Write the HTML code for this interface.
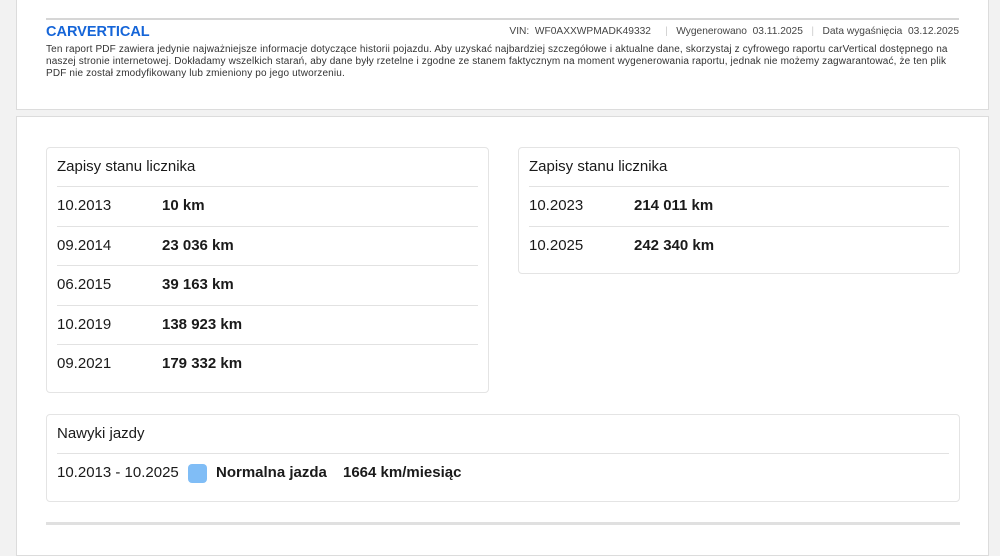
<!DOCTYPE html><html><head><meta charset="utf-8"><style>
*{margin:0;padding:0;box-sizing:border-box}
body{width:1000px;height:536px;overflow:hidden;background:#f2f2f2;font-family:"Liberation Sans",sans-serif;color:#1a1a1a;position:relative}
.card{position:absolute;background:#fff;border:1px solid #dcdcdc}
.in{position:absolute;background:#fff;border:1px solid #e4e4e4;border-radius:4px}
.t{position:absolute;left:10px;top:10px;font-size:15px}
.sep{position:absolute;left:10px;right:10px;height:1px;background:#e2e2e2}
.row{position:absolute;left:10px;font-size:15px;height:20px;line-height:20px}
.row b{position:absolute;left:105px;white-space:nowrap}
</style></head><body>
<div class="card" style="left:16px;top:-2px;width:973px;height:112px">
 <div style="position:absolute;left:29px;top:19px;width:913px;height:2px;background:#d6d6d6"></div>
 <div style="position:absolute;left:29px;top:25px;font-size:14.5px;font-weight:bold;color:#1565d8">CARVERTICAL</div>
 <div style="position:absolute;right:29px;top:27px;font-size:10.2px;color:#444;white-space:nowrap">VIN:&nbsp; WF0AXXWPMADK49332 &nbsp;&nbsp;&nbsp;&nbsp;<span style="color:#ccc">|</span>&nbsp;&nbsp; Wygenerowano&nbsp; 03.11.2025&nbsp;&nbsp; <span style="color:#ccc">|</span>&nbsp;&nbsp; Data wygaśnięcia&nbsp; 03.12.2025</div>
 <div style="position:absolute;left:29px;top:45px;white-space:nowrap;font-size:10px;line-height:12px;color:#333;letter-spacing:0.15px">Ten raport PDF zawiera jedynie najważniejsze informacje dotyczące historii pojazdu. Aby uzyskać najbardziej szczegółowe i aktualne dane, skorzystaj z cyfrowego raportu carVertical dostępnego na<br>naszej stronie internetowej. Dokładamy wszelkich starań, aby dane były rzetelne i zgodne ze stanem faktycznym na moment wygenerowania raportu, jednak nie możemy zagwarantować, że ten plik<br>PDF nie został zmodyfikowany lub zmieniony po jego utworzeniu.</div>
</div>
<div class="card" style="left:16px;top:116px;width:973px;height:440px">
 <div style="position:absolute;left:29px;top:405px;width:914px;height:3px;background:#e0e0e0"></div>
</div>
<div class="in" style="left:46px;top:147px;width:443px;height:246px">
 <div class="t">Zapisy stanu licznika</div>
 <div class="sep" style="top:38px"></div>
 <div class="row" style="top:48px">10.2013<b>10 km</b></div>
 <div class="sep" style="top:78px"></div>
 <div class="row" style="top:88px">09.2014<b>23 036 km</b></div>
 <div class="sep" style="top:117px"></div>
 <div class="row" style="top:127px">06.2015<b>39 163 km</b></div>
 <div class="sep" style="top:157px"></div>
 <div class="row" style="top:167px">10.2019<b>138 923 km</b></div>
 <div class="sep" style="top:196px"></div>
 <div class="row" style="top:206px">09.2021<b>179 332 km</b></div>
</div>
<div class="in" style="left:518px;top:147px;width:442px;height:127px">
 <div class="t">Zapisy stanu licznika</div>
 <div class="sep" style="top:38px"></div>
 <div class="row" style="top:48px">10.2023<b>214 011 km</b></div>
 <div class="sep" style="top:78px"></div>
 <div class="row" style="top:88px">10.2025<b>242 340 km</b></div>
</div>
<div class="in" style="left:46px;top:414px;width:914px;height:88px">
 <div class="t">Nawyki jazdy</div>
 <div class="sep" style="top:38px"></div>
 <div class="row" style="top:48px;white-space:nowrap">10.2013 - 10.2025<span style="position:absolute;left:131px;top:1px;width:19px;height:19px;border-radius:4px;background:#80bdf6"></span><b style="left:159px">Normalna jazda</b><b style="left:286px">1664 km/miesiąc</b></div>
</div>
</body></html>
